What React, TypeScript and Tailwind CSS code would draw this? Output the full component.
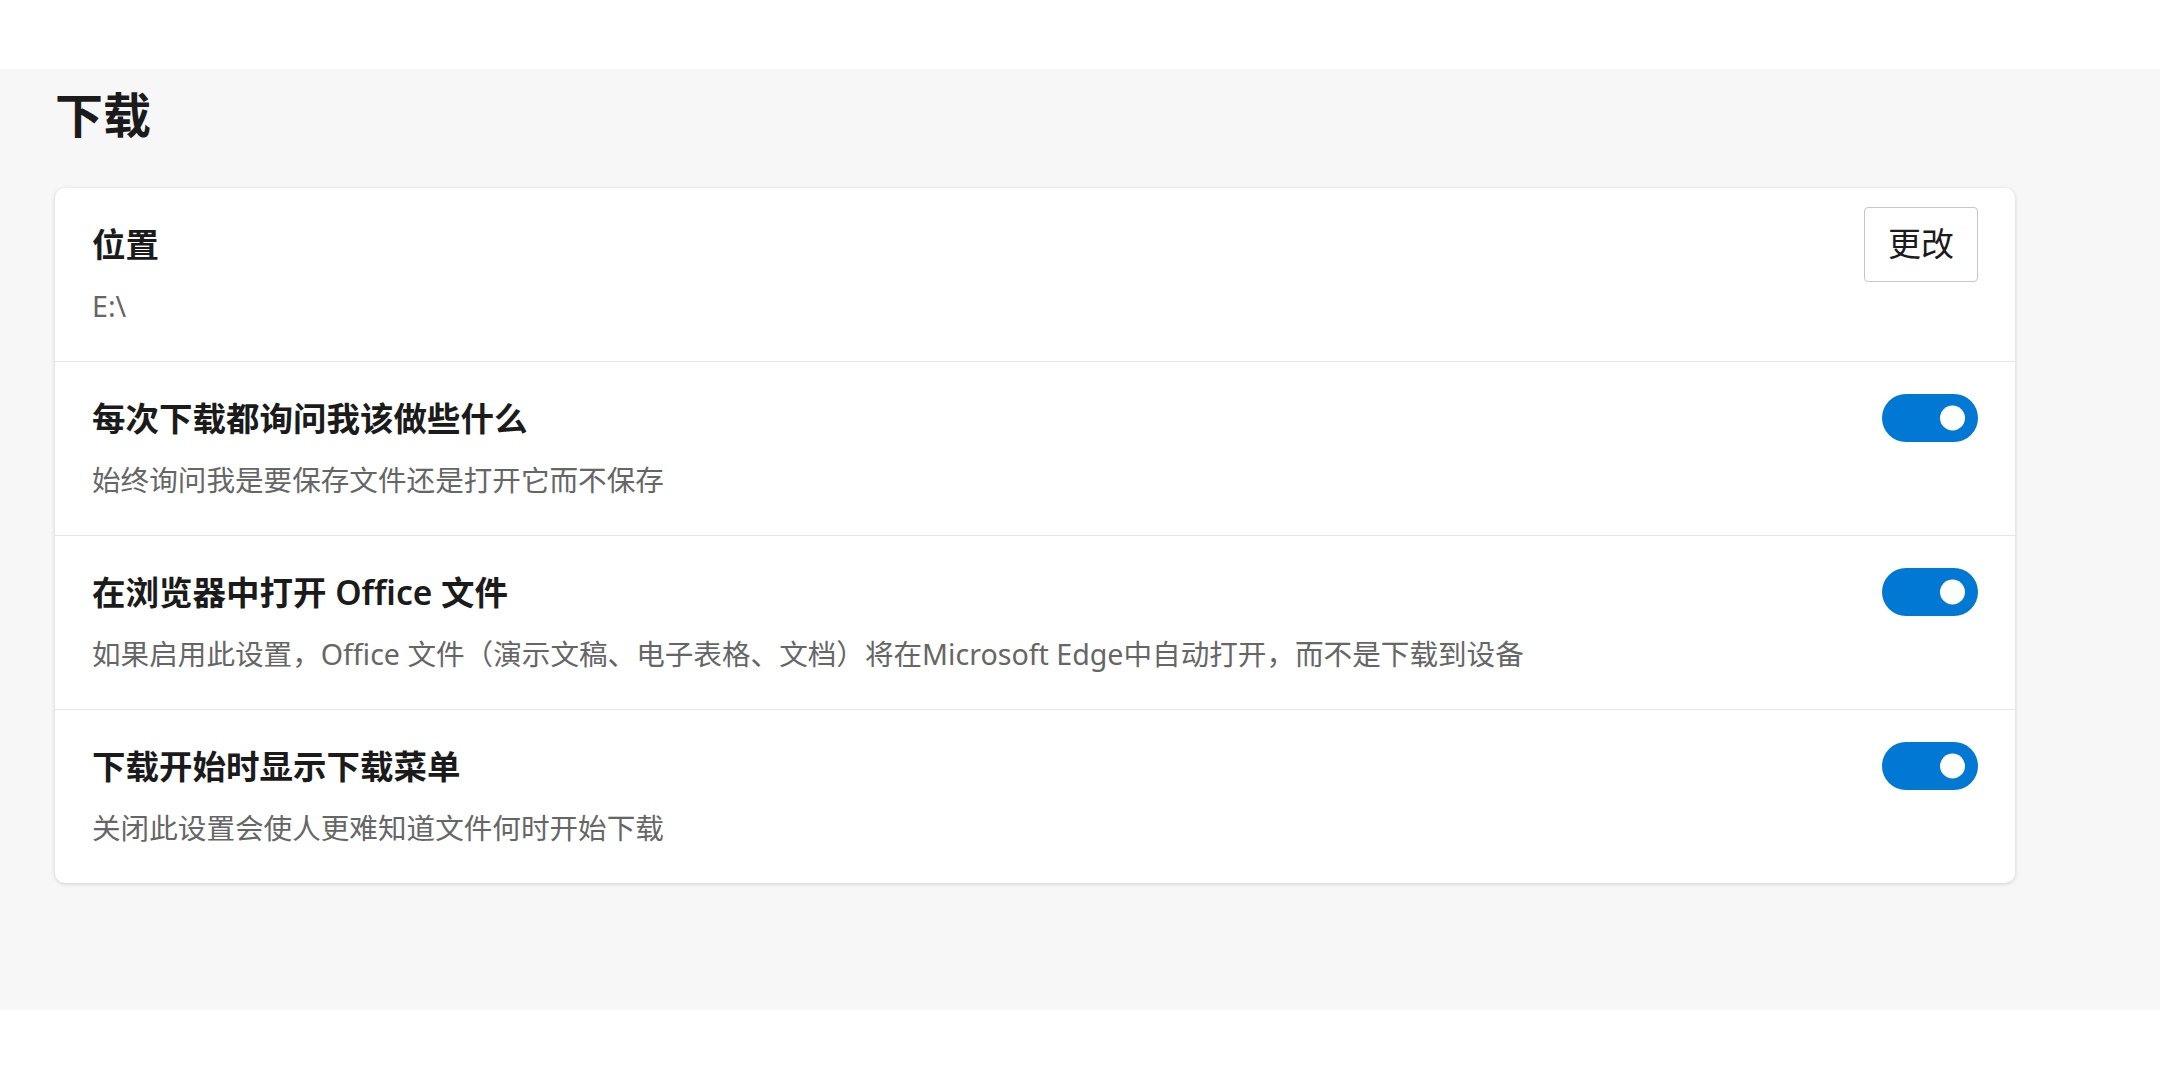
import React, { useState } from 'react'

const font = { fontFamily: '"Noto Sans", "Noto Sans CJK SC", sans-serif' }

function Toggle({ on, onChange }: { on: boolean; onChange: () => void }) {
  return (
    <button
      onClick={onChange}
      className={
        'relative h-[48px] w-[96px] rounded-full ' +
        (on ? 'bg-[#0078d4]' : 'bg-white border-2 border-[#5c5c5c]')
      }
    >
      <span
        className={
          'absolute top-1/2 h-[25px] w-[25px] -translate-y-1/2 rounded-full ' +
          (on ? 'right-[13px] bg-white' : 'left-[13px] bg-[#5c5c5c]')
        }
      />
    </button>
  )
}

function Row({
  title,
  desc,
  right,
  last,
}: {
  title: string
  desc: string
  right: React.ReactNode
  last?: boolean
}) {
  return (
    <div
      className={
        'flex items-start justify-between px-[37px] pt-[32px] pb-[35px] ' +
        (last ? '' : 'border-b border-[#e6e6e6]')
      }
    >
      <div className="flex flex-col">
        <div className="text-[33.5px] leading-[48px] font-semibold text-[#1b1b1b]">{title}</div>
        <div className="mt-[18px] text-[28.6px] leading-[40px] text-[#666666]">{desc}</div>
      </div>
      <div className="flex h-[48px] items-center">{right}</div>
    </div>
  )
}

export default function App() {
  const [ask, setAsk] = useState(true)
  const [office, setOffice] = useState(true)
  const [menu, setMenu] = useState(true)

  return (
    <div className="flex h-[1080px] w-[2160px] flex-col bg-white" style={font}>
      <div className="h-[69px] shrink-0" />
      <section className="flex h-[941px] shrink-0 flex-col bg-[#f7f7f7] px-[55px] pt-[16px]">
        <h1 className="text-[48px] leading-[60px] font-bold text-[#1b1b1b]">下载</h1>
        <div className="mt-[43px] w-[1960px] rounded-[10px] bg-white shadow-[0_1px_4px_rgba(0,0,0,0.16)]">
          <Row
            title="位置"
            desc="E:\"
            right={
              <button className="h-[75px] w-[114px] shrink-0 rounded-[4px] border border-[#c6c6c6] bg-white text-[33px] text-[#1b1b1b]">
                更改
              </button>
            }
          />
          <Row
            title="每次下载都询问我该做些什么"
            desc="始终询问我是要保存文件还是打开它而不保存"
            right={<Toggle on={ask} onChange={() => setAsk(!ask)} />}
          />
          <Row
            title="在浏览器中打开 Office 文件"
            desc="如果启用此设置，Office 文件（演示文稿、电子表格、文档）将在Microsoft Edge中自动打开，而不是下载到设备"
            right={<Toggle on={office} onChange={() => setOffice(!office)} />}
          />
          <Row
            title="下载开始时显示下载菜单"
            desc="关闭此设置会使人更难知道文件何时开始下载"
            right={<Toggle on={menu} onChange={() => setMenu(!menu)} />}
            last
          />
        </div>
      </section>
    </div>
  )
}
